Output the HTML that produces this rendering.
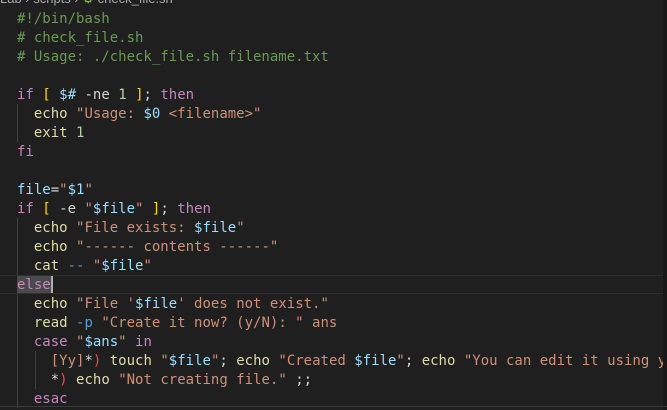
<!DOCTYPE html>
<html><head><meta charset="utf-8"><style>
html,body{margin:0;padding:0;}
body{width:667px;height:410px;background:#1f1f1f;overflow:hidden;position:relative;font-family:"DejaVu Sans Mono","Liberation Mono",monospace;font-size:14px;}
.crumb{position:absolute;left:0;top:-9px;font-family:"Liberation Sans",sans-serif;font-size:13px;color:#a9a9a9;white-space:pre;}
.code{position:absolute;left:17px;top:10px;}
.l{height:19px;line-height:19px;white-space:pre;color:#d4d4d4;}
.c{color:#6a9955}.k{color:#c586c0}.y{color:#ffd700}.v{color:#9cdcfe}.s{color:#ce9178}.f{color:#dcdcaa}.b{color:#569cd6}.r{color:#f44747}.n{color:#b5cea8}
.guide{position:absolute;width:1px;background:#404040;}
.cur{position:absolute;left:0;width:663px;top:275px;height:17px;border-top:1px solid #2e2e2e;border-bottom:1px solid #2e2e2e;}
.sel{position:absolute;left:17px;top:276px;width:34px;height:17px;background:#4a4a4a;}
.caret{position:absolute;left:51px;top:276px;width:2px;height:17px;background:#aeafad;}
.sb{position:absolute;right:0;top:0;width:4px;height:410px;background:#181818;}
.bot{position:absolute;left:0;top:406px;width:667px;height:1px;background:#3a3a3a;}
</style></head><body>
<div class="crumb">Lab › scripts › <span style="color:#8dc149">⚙</span> check_file.sh</div>
<div class="cur"></div>
<div class="sel"></div>
<div class="caret"></div>
<div class="guide" style="left:17px;top:104px;height:38px"></div>
<div class="guide" style="left:17px;top:218px;height:57px"></div>
<div class="guide" style="left:17px;top:294px;height:114px"></div>
<div class="guide" style="left:35px;top:351px;height:38px"></div>
<div class="code">
<div class="l"><span class="c">#!/bin/bash</span></div>
<div class="l"><span class="c"># check_file.sh</span></div>
<div class="l"><span class="c"># Usage: ./check_file.sh filename.txt</span></div>
<div class="l"> </div>
<div class="l"><span class="k">if</span> <span class="y">[</span> <span class="v">$#</span> -ne <span class="n">1</span> <span class="y">]</span>; <span class="k">then</span></div>
<div class="l">  <span class="f">echo</span> <span class="s">"Usage: </span><span class="v">$0</span><span class="s"> &lt;filename&gt;"</span></div>
<div class="l">  <span class="f">exit</span> <span class="n">1</span></div>
<div class="l"><span class="k">fi</span></div>
<div class="l"> </div>
<div class="l"><span class="v">file</span>=<span class="s">"</span><span class="v">$1</span><span class="s">"</span></div>
<div class="l"><span class="k">if</span> <span class="y">[</span> -e <span class="s">"</span><span class="v">$file</span><span class="s">"</span> <span class="y">]</span>; <span class="k">then</span></div>
<div class="l">  <span class="f">echo</span> <span class="s">"File exists: </span><span class="v">$file</span><span class="s">"</span></div>
<div class="l">  <span class="f">echo</span> <span class="s">"------ contents ------"</span></div>
<div class="l">  <span class="f">cat</span> <span class="b">--</span> <span class="s">"</span><span class="v">$file</span><span class="s">"</span></div>
<div class="l"><span class="k">else</span></div>
<div class="l">  <span class="f">echo</span> <span class="s">"File '</span><span class="v">$file</span><span class="s">' does not exist."</span></div>
<div class="l">  <span class="f">read</span> <span class="b">-p</span> <span class="s">"Create it now? (y/N): "</span> <span class="s">ans</span></div>
<div class="l">  <span class="k">case</span> <span class="s">"</span><span class="v">$ans</span><span class="s">"</span> <span class="k">in</span></div>
<div class="l">    <span class="s">[Yy]</span>*<span class="r">)</span> <span class="f">touch</span> <span class="s">"</span><span class="v">$file</span><span class="s">"</span>; <span class="f">echo</span> <span class="s">"Created </span><span class="v">$file</span><span class="s">"</span>; <span class="f">echo</span> <span class="s">"You can edit it using y</span></div>
<div class="l">    *<span class="r">)</span> <span class="f">echo</span> <span class="s">"Not creating file."</span> ;;</div>
<div class="l">  <span class="k">esac</span></div>
</div>
<div class="sb"></div>
<div class="bot"></div>
</body></html>
